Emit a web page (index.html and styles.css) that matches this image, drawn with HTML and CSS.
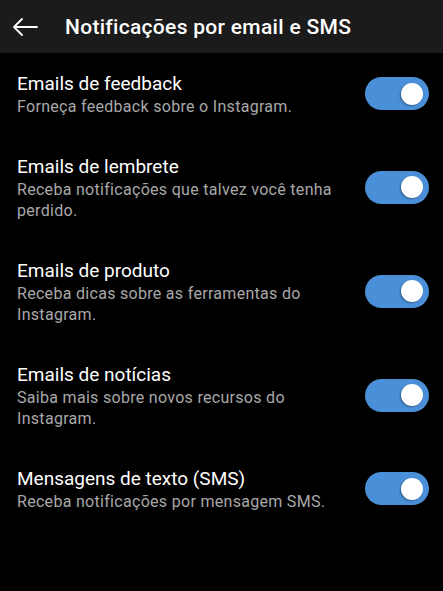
FILE: index.html
```html
<!DOCTYPE html>
<html lang="pt">
<head>
  <meta charset="UTF-8" />
  <meta name="viewport" content="width=device-width, initial-scale=1" />
  <title>Notificações por email e SMS</title>
  <link rel="stylesheet" href="styles.css">
</head>
<body>
  <header class="topbar">
    <svg class="back" width="28" height="20" viewBox="0 0 28 20">
      <path d="M26 10H3M11 2L3 10L11 18" fill="none" stroke="#fff" stroke-width="1.8" stroke-linecap="round" stroke-linejoin="round"/>
    </svg>
    <h1>Notificações por email e SMS</h1>
  </header>

  <main class="list">
    <div class="row">
      <div class="text">
        <div class="title">Emails de feedback</div>
        <div class="sub">Forneça feedback sobre o Instagram.</div>
      </div>
      <span class="toggle"><span class="knob"></span></span>
    </div>

    <div class="row">
      <div class="text">
        <div class="title">Emails de lembrete</div>
        <div class="sub">Receba notificações que talvez você tenha perdido.</div>
      </div>
      <span class="toggle"><span class="knob"></span></span>
    </div>

    <div class="row">
      <div class="text">
        <div class="title">Emails de produto</div>
        <div class="sub">Receba dicas sobre as ferramentas do Instagram.</div>
      </div>
      <span class="toggle"><span class="knob"></span></span>
    </div>

    <div class="row">
      <div class="text">
        <div class="title">Emails de notícias</div>
        <div class="sub">Saiba mais sobre novos recursos do Instagram.</div>
      </div>
      <span class="toggle"><span class="knob"></span></span>
    </div>

    <div class="row">
      <div class="text">
        <div class="title">Mensagens de texto (SMS)</div>
        <div class="sub">Receba notificações por mensagem SMS.</div>
      </div>
      <span class="toggle"><span class="knob"></span></span>
    </div>
  </main>
</body>
</html>
```

FILE: styles.css
```css
body {
  font-family: Roboto, "Noto Sans", sans-serif;
  background-color: #000;
  color: #fff;
  margin: 0; padding: 0;
}
.topbar {
  background-color: #1b1b1b;
  height: 53px;
  display: flex;
  align-items: center;
  padding-left: 11px;
}
.back {
  display: block;
  margin-right: 26px;
}
.topbar h1 {
  font-size: 21px;
  font-weight: 500;
  letter-spacing: 0.3px;
  margin: 0;
  color: #fff;
}
.list {
  padding: 0 14px 0 17px;
}
.row {
  display: flex;
  align-items: center;
  justify-content: space-between;
  padding: 19px 0;
}
.text {
  flex: 1;
  padding-right: 24px;
}
.title {
  font-size: 19px;
  line-height: 24px;
  color: #fff;
}
.sub {
  font-size: 16px;
  line-height: 21px;
  letter-spacing: 0.3px;
  color: #a8a8a8;
}
.toggle {
  flex: none;
  width: 64px;
  height: 33px;
  border-radius: 17px;
  background-color: #4a90d9;
  display: flex;
  align-items: center;
  justify-content: flex-end;
  padding-right: 6px;
  box-sizing: border-box;
  margin-top: -2px;
}
.knob {
  width: 22px;
  height: 22px;
  border-radius: 50%;
  background-color: #fff;
  box-shadow: -1px 1px 2px rgba(0,0,0,0.35);
}
```
